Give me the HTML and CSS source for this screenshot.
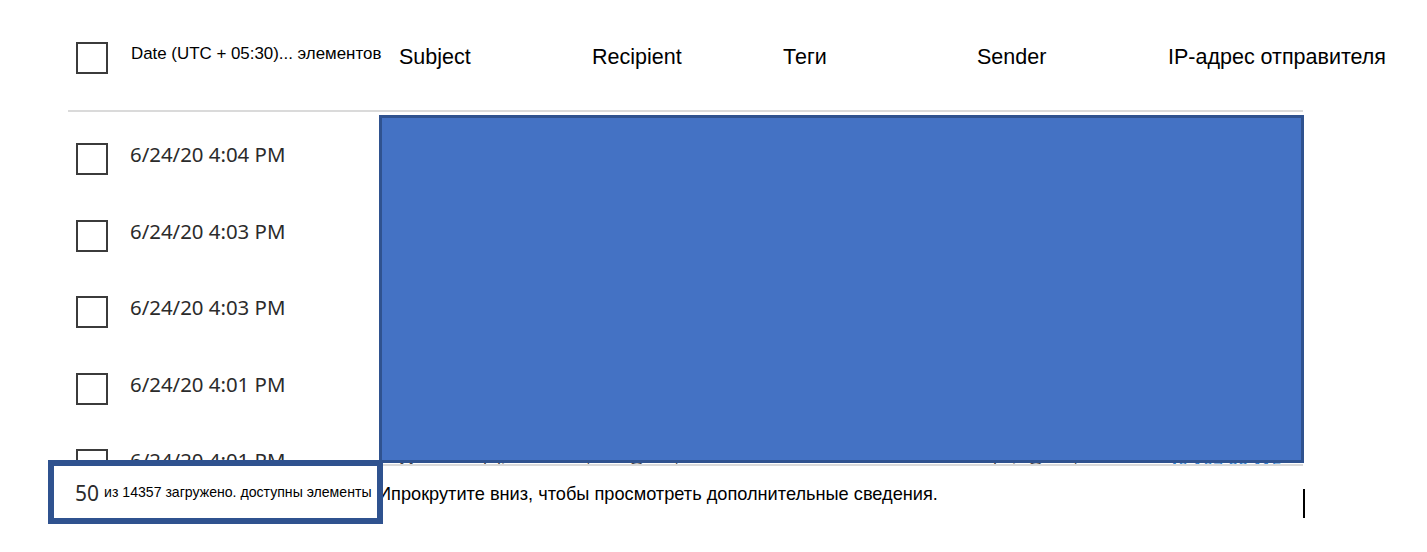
FILE: index.html
```html
<!DOCTYPE html>
<html lang="ru">
<head>
<meta charset="utf-8">
<title>Messages</title>
<link rel="stylesheet" href="styles.css">
</head>
<body>
<div class="page">
  <div class="header">
    <span class="cb"></span>
    <div class="hcol h-date">Date (UTC + 05:30)... элементов</div>
    <div class="hcol h-subject">Subject</div>
    <div class="hcol h-recipient">Recipient</div>
    <div class="hcol h-tags">Теги</div>
    <div class="hcol h-sender">Sender</div>
    <div class="hcol h-ip">IP-адрес отправителя</div>
  </div>
  <div class="list">
    <div class="row"><span class="cb"></span><span class="date">6/24/20 4:04 PM</span></div>
    <div class="row"><span class="cb"></span><span class="date">6/24/20 4:03 PM</span></div>
    <div class="row"><span class="cb"></span><span class="date">6/24/20 4:03 PM</span></div>
    <div class="row"><span class="cb"></span><span class="date">6/24/20 4:01 PM</span></div>
    <div class="row">
      <span class="cb"></span><span class="date">6/24/20 4:01 PM</span>
      <span class="cell c-subject">Message delivery report</span>
      <span class="cell c-recipient">user@contoso.com</span>
      <span class="cell c-tags"></span>
      <span class="cell c-sender">admin@contoso.com</span>
      <span class="cell c-ip">40.107.22.115</span>
    </div>
  </div>
  <div class="footer">
    <div class="line"><span class="status"><span class="count">50</span> <span class="loaded">из 14357 загружено. доступны элементы</span></span><span class="hint">Ипрокрутите вниз, чтобы просмотреть дополнительные сведения.</span></div>
    <span class="caret"></span>
  </div>
  <div class="redact"></div>
  <div class="annot"></div>
</div>
</body>
</html>
```
FILE: styles.css
```css
html, body {
  margin: 0;
  padding: 0;
  background: #ffffff;
}

body {
  font-family: "Liberation Sans", Arial, sans-serif;
  color: #000;
  overflow: hidden;
  height: 552px;
}

.page {
  position: relative;
  margin-left: 68px;
  width: 1235px;
}

.cb {
  flex: none;
  width: 32px;
  height: 32px;
  box-sizing: border-box;
  border: 2px solid #3b3b3b;
  background: #fff;
}

.header {
  display: flex;
  align-items: flex-start;
  height: 112px;
  box-sizing: border-box;
  padding: 42px 0 0 8px;
  border-bottom: 2px solid #dadada;
  white-space: nowrap;
}

.header .cb {
  margin-right: 23px;
}

.hcol {
  flex: none;
  height: 32px;
  line-height: 32px;
  font-size: 21.5px;
  color: #000;
  margin-top: -1px;
}

.h-date {
  width: 268px;
  font-size: 16.9px;
  margin-top: -4px;
}

.h-subject { width: 193px; }
.h-recipient { width: 191px; }
.h-tags { width: 194px; }
.h-sender { width: 191px; }
.h-ip { width: 220px; }

.list {
  height: 352px;
  overflow: hidden;
  border-bottom: 2px solid #dadada;
}

.row {
  display: flex;
  align-items: flex-start;
  height: 76.5px;
  box-sizing: border-box;
  padding: 31px 0 0 8px;
  white-space: nowrap;
}

.row .cb {
  margin-right: 22px;
}

.date {
  flex: none;
  width: 269px;
  font-family: "Noto Sans", "Open Sans", sans-serif;
  font-size: 20.4px;
  line-height: 24px;
  margin-top: -1px;
  color: #2b2b2b;
}

.cell {
  flex: none;
  font-size: 18px;
  line-height: 24px;
  margin-top: 8px;
  color: #444;
}

.c-subject { width: 193px; }
.c-recipient { width: 191px; }
.c-tags { width: 194px; }
.c-sender { width: 191px; }
.c-ip { width: 130px; color: #2f7fd1; }

.footer {
  display: flex;
  align-items: flex-start;
  margin-right: -2px;
  padding-top: 11px;
  height: 75px;
  box-sizing: border-box;
}

.line {
  flex: 1;
  padding-left: 7px;
  font-size: 18px;
  line-height: 30px;
  white-space: nowrap;
  color: #000;
}

.status {
  display: inline-block;
  width: 303px;
}

.count {
  font-family: "Noto Sans", "Open Sans", sans-serif;
  font-size: 21px;
  color: #2b2b2b;
  vertical-align: -1px;
}

.loaded {
  font-size: 14.1px;
  vertical-align: 3px;
  color: #000;
}

.hint {
  font-size: 18.2px;
}

.caret {
  flex: none;
  width: 2px;
  height: 29px;
  margin-top: 12px;
  background: #000;
}

.redact {
  position: absolute;
  left: 311px;
  top: 115px;
  width: 925px;
  height: 348px;
  box-sizing: border-box;
  background: #4472c4;
  border: 3px solid #2f528f;
}

.annot {
  position: absolute;
  left: -20px;
  top: 460px;
  width: 335px;
  height: 64px;
  box-sizing: border-box;
  border: 6px solid #2f528f;
}
```
